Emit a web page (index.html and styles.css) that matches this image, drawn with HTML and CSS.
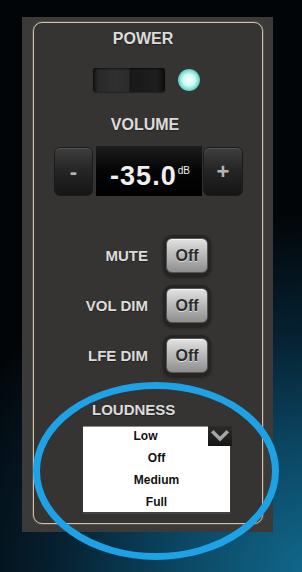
FILE: index.html
```html
<!DOCTYPE html>
<html lang="en">
<head>
  <meta charset="UTF-8">
  <title>Amplifier Control</title>
  <meta name="viewport" content="width=device-width, initial-scale=1.0">
  <link rel="stylesheet" href="styles.css">
</head>
<body>
  <div class="panel">
    <div class="inner">
      <div class="label label-power">POWER</div>
      <div class="power-row">
        <div class="switch"></div>
        <div class="led"></div>
      </div>

      <div class="label label-volume">VOLUME</div>
      <div class="volume">
        <button class="vol-btn">-</button>
        <div class="vol-display">-35.0<sup>dB</sup></div>
        <button class="vol-btn vol-plus">+</button>
      </div>

      <div class="toggles">
        <div class="toggle-row">
          <span class="toggle-label">MUTE</span>
          <button class="off-btn">Off</button>
        </div>
        <div class="toggle-row">
          <span class="toggle-label">VOL DIM</span>
          <button class="off-btn">Off</button>
        </div>
        <div class="toggle-row">
          <span class="toggle-label">LFE DIM</span>
          <button class="off-btn">Off</button>
        </div>
      </div>

      <div class="label label-loudness">LOUDNESS</div>
      <div class="select">
        <div class="select-value">Low</div>
        <div class="select-arrow">
          <!-- chevron -->
          <svg width="24" height="20" viewBox="0 0 24 20">
            <path d="M5.5 6.5 L12 13 L18.5 6.5" fill="none" stroke="#a4a4a4" stroke-width="3.6" stroke-linecap="square"/>
          </svg>
        </div>
        <ul class="select-list">
          <li>Off</li>
          <li>Medium</li>
          <li>Full</li>
        </ul>
      </div>
    </div>
  </div>

  <!-- highlight ring drawn over the screenshot -->
  <svg class="ring" width="302" height="572" viewBox="0 0 302 572">
    <ellipse cx="156" cy="471" rx="119.5" ry="85.5" fill="none" stroke="#1ea2e6" stroke-width="7"/>
  </svg>
</body>
</html>
```

FILE: styles.css
```css
body {
  margin: 0;
  width: 302px;
  height: 572px;
  overflow: hidden;
  position: relative;
  font-family: "Liberation Sans", Arial, sans-serif;
  background-color: #020305;
  background-image: radial-gradient(ellipse 380px 360px at 310px 572px, #11688c 0%, #0b4662 35%, #062233 65%, #020508 100%);
}
.panel {
  margin: 17px 0 0 22px;
  width: 251px;
  height: 515px;
  box-sizing: border-box;
  padding: 5px 10px 8px 11px;
  background-color: #3c3a38;
}
.inner {
  height: 502px;
  box-sizing: border-box;
  padding-top: 7px;
  border: 1px solid #cdc3ad;
  border-radius: 9px;
  box-shadow: 0 0 0 1px rgba(120, 112, 96, 0.45);
  background-color: #363432;
  position: relative;
}
.label {
  font-size: 16px;
  font-weight: 700;
  line-height: 18px;
  color: #dcdcdc;
  text-shadow: 0 1px 1px rgba(0, 0, 0, 0.4);
}
.label-power {
  text-align: center;
  padding-right: 10px;
}
.label-volume {
  text-align: center;
  padding-right: 6px;
  margin-top: 24px;
}
.label-loudness {
  font-size: 15px;
  line-height: 17px;
  margin: 28px 0 0 58px;
}
.power-row {
  display: flex;
  align-items: center;
  margin: 20px 0 0 59px;
  gap: 13px;
}
.switch {
  width: 72px;
  height: 24px;
  border-radius: 3px;
  background: linear-gradient(90deg, #111 0, #282828 7%, #303030 30%, #2c2c2c 50%, #181818 51%, #1e1e1e 88%, #0e0e0e 100%);
  box-shadow: inset 0 1px 2px rgba(0, 0, 0, 0.6), 0 1px 1px rgba(0, 0, 0, 0.3);
}
.led {
  width: 22px;
  height: 22px;
  border-radius: 50%;
  background: radial-gradient(circle, #f6fffe 0, #d0faf5 38%, #6cdcd2 64%, rgba(60, 190, 180, 0.4) 84%, rgba(60, 190, 180, 0) 100%);
}
.volume {
  display: flex;
  margin: 12px 0 0 20px;
  height: 50px;
}
.vol-btn {
  width: 39px;
  height: 49px;
  margin-top: 1px;
  border: 1px solid #1a1a1a;
  border-radius: 6px;
  background: linear-gradient(#3e3e3e, #262626 45%, #151515);
  box-shadow: inset 0 1px 0 rgba(255, 255, 255, 0.12);
  color: #b4b4b4;
  font-family: "Liberation Sans", Arial, sans-serif;
  font-size: 22px;
  font-weight: 700;
  padding: 0;
}
.vol-plus {
  width: 40px;
  margin-left: 1px;
}
.vol-display {
  width: 106px;
  height: 50px;
  margin-left: 3px;
  background: linear-gradient(#1c1c1c, #050505 50%, #000);
  color: #efefef;
  font-size: 27px;
  font-weight: 700;
  letter-spacing: 1px;
  line-height: 50px;
  text-align: center;
  padding-left: 2px;
  box-sizing: border-box;
}
.vol-display sup {
  font-size: 10px;
  font-weight: 400;
  letter-spacing: 0;
  vertical-align: 11px;
  margin-left: 1px;
}
.toggles {
  display: flex;
  flex-direction: column;
  gap: 15px;
  margin-top: 42px;
}
.toggle-row {
  display: flex;
  align-items: center;
  gap: 18px;
}
.toggle-label {
  width: 114px;
  text-align: right;
  font-size: 15px;
  font-weight: 700;
  color: #dcdcdc;
  text-shadow: 0 1px 1px rgba(0, 0, 0, 0.4);
}
.off-btn {
  width: 42px;
  height: 35px;
  padding: 0;
  border: 1px solid #555;
  border-radius: 6px;
  background: linear-gradient(#e2e2e2, #b8b8b8 50%, #8e8e8e);
  box-shadow: 0 0 0 3px #262524, 0 2px 3px 3px rgba(0, 0, 0, 0.35), inset 0 1px 0 #f4f4f4;
  color: #2c2c2c;
  font-family: "Liberation Sans", Arial, sans-serif;
  font-size: 16px;
  font-weight: 700;
  text-shadow: 0 1px 0 rgba(255, 255, 255, 0.6);
}
.select {
  position: relative;
  display: flex;
  width: 149px;
  height: 20px;
  margin: 8px 0 0 49px;
}
.select-value {
  width: 125px;
  height: 20px;
  box-sizing: border-box;
  background: #fff;
  border-top: 1px solid #8a8a8a;
  font-size: 12px;
  font-weight: 700;
  line-height: 19px;
  text-align: center;
  color: #111;
}
.select-arrow {
  width: 24px;
  height: 20px;
  background: linear-gradient(#2c2c2c, #151515);
}
.select-arrow svg {
  display: block;
}
.select-list {
  position: absolute;
  left: 0;
  top: 20px;
  width: 148px;
  height: 68px;
  box-sizing: border-box;
  margin: 0;
  padding: 1px 0 0;
  list-style: none;
  background: #fff;
  border-right: 1px solid #3a3a3a;
  border-bottom: 2px solid #444;
}
.select-list li {
  height: 22px;
  line-height: 22px;
  text-align: center;
  font-size: 12px;
  font-weight: 700;
  color: #111;
}
.ring {
  position: absolute;
  left: 0;
  top: 0;
  pointer-events: none;
}
```
